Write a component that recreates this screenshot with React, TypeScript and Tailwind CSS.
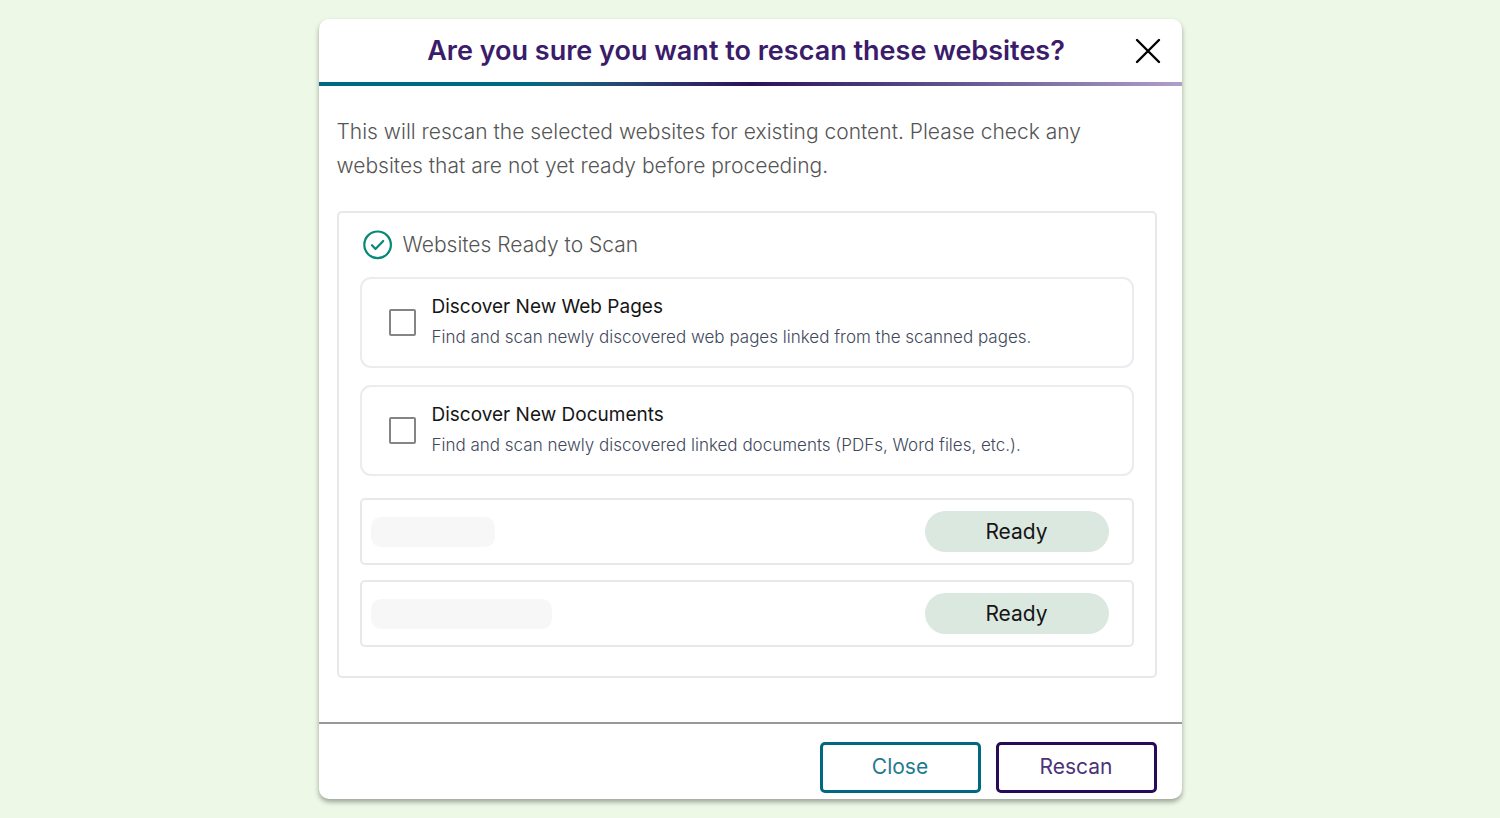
import { useState } from 'react'

type ScanOption = {
    id: string
    title: string
    description: string
}

const SCAN_OPTIONS: ScanOption[] = [
    {
        id: 'web_pages',
        title: 'Discover New Web Pages',
        description: 'Find and scan newly discovered web pages linked from the scanned pages.'
    },
    {
        id: 'documents',
        title: 'Discover New Documents',
        description: 'Find and scan newly discovered linked documents (PDFs, Word files, etc.).'
    }
]

// Site names stay hidden behind a placeholder bar
const WEBSITES = [
    { id: 1, bar: 'w-[124px]', status: 'Ready' },
    { id: 2, bar: 'w-[181px]', status: 'Ready' }
]

function CloseIcon() {
    return (
        <svg viewBox="0 0 26 26" className="size-[26px]" fill="none" stroke="currentColor" strokeWidth="2.4" strokeLinecap="round" aria-hidden="true">
            <path d="M2 2l22 22M24 2L2 24" />
        </svg>
    )
}

function CheckCircleIcon() {
    return (
        <svg viewBox="0 0 30 30" className="size-[30px] shrink-0" fill="none" stroke="currentColor" strokeWidth="2.2" strokeLinecap="round" strokeLinejoin="round" aria-hidden="true">
            <circle cx="14.6" cy="14.8" r="13.3" />
            <path d="M9 15.2l3.5 3.8 7.7-8" />
        </svg>
    )
}

export default function App() {
    const [selected, setSelected] = useState<Record<string, boolean>>({})

    const handleToggle = (id: string) => {
        setSelected(prev => ({ ...prev, [id]: !prev[id] }))
    }

    return (
        <main className="min-h-screen bg-[#eef8e7] px-4 py-[19px] font-['Inter',sans-serif]">
            <div
                role="dialog"
                aria-labelledby="rescan-title"
                className="mx-auto max-w-[863px] overflow-hidden rounded-[10px] bg-white shadow-[0_3px_5px_rgba(0,0,0,0.35)]"
            >
                {/* Header */}
                <header className="grid h-[63px] grid-cols-[1fr_auto_1fr] items-center pr-[21px]">
                    <h1 id="rescan-title" className="col-start-2 pl-[13px] text-[27px] leading-[34px] font-semibold text-[#3b1c6b]">
                        Are you sure you want to rescan these websites?
                    </h1>
                    <button type="button" aria-label="Close dialog" className="justify-self-end text-black">
                        <CloseIcon />
                    </button>
                </header>
                <div className="h-1 bg-linear-to-r from-[#006880] from-25% via-[#2b0f5c] via-50% to-[#b09fc9]" />

                {/* Body */}
                <div className="pt-[29px] pr-[25px] pb-[44px] pl-[18px]">
                    <p className="text-[21px] leading-[34px] font-light text-[#555555]">
                        This will rescan the selected websites for existing content. Please check any websites that are not yet ready before proceeding.
                    </p>

                    <section className="mt-[28px] rounded-[5px] border-2 border-[#e8e8e8] px-[21px] pt-[17px] pb-[29px]">
                        <h2 className="flex items-center gap-[10px] pl-[3px] text-[21px] leading-[30px] font-light text-[#555555]">
                            <span className="text-[#068a73]">
                                <CheckCircleIcon />
                            </span>
                            Websites Ready to Scan
                        </h2>

                        <div className="mt-[17px] space-y-[17px]">
                            {SCAN_OPTIONS.map((option) => (
                                <label key={option.id} className="flex items-center gap-[16px] rounded-[11px] border-2 border-[#ebebf0] py-[12px] pl-[27px]">
                                    <input
                                        type="checkbox"
                                        name={option.id}
                                        checked={!!selected[option.id]}
                                        onChange={() => handleToggle(option.id)}
                                        className="size-[27px] shrink-0 appearance-none rounded-[2px] border-2 border-[#858585] bg-white checked:bg-[#006880]"
                                    />
                                    <span>
                                        <span className="block text-[19px] leading-[32px] text-[#161616]">{option.title}</span>
                                        <span className="block pb-[3px] text-[17px] leading-[28px] font-light text-[#3f495c]">{option.description}</span>
                                    </span>
                                </label>
                            ))}
                        </div>

                        <ul className="mt-[22px] space-y-[15px]">
                            {WEBSITES.map((site) => (
                                <li key={site.id} className="flex h-[67px] items-center justify-between rounded-[5px] border-2 border-[#e8e8e8] pr-[23px] pl-[9px]">
                                    <span className={`h-[30px] rounded-[10px] bg-[#f7f7f7] ${site.bar}`} />
                                    <span className="w-[184px] rounded-full bg-[#dbe8e0] text-center text-[21px] leading-[41px] text-[#161616]">
                                        {site.status}
                                    </span>
                                </li>
                            ))}
                        </ul>
                    </section>
                </div>

                {/* Footer */}
                <footer className="flex justify-end gap-[15px] border-t-2 border-[#999999] pt-[18px] pr-[25px] pb-[6px]">
                    <button
                        type="button"
                        className="h-[51px] w-[161px] rounded-[5px] border-3 border-[#006880] pb-[2px] text-[21px] text-[#1f7a90]"
                    >
                        Close
                    </button>
                    <button
                        type="button"
                        className="h-[51px] w-[161px] rounded-[5px] border-3 border-[#280a58] pb-[2px] text-[21px] text-[#4b3379]"
                    >
                        Rescan
                    </button>
                </footer>
            </div>
        </main>
    )
}
